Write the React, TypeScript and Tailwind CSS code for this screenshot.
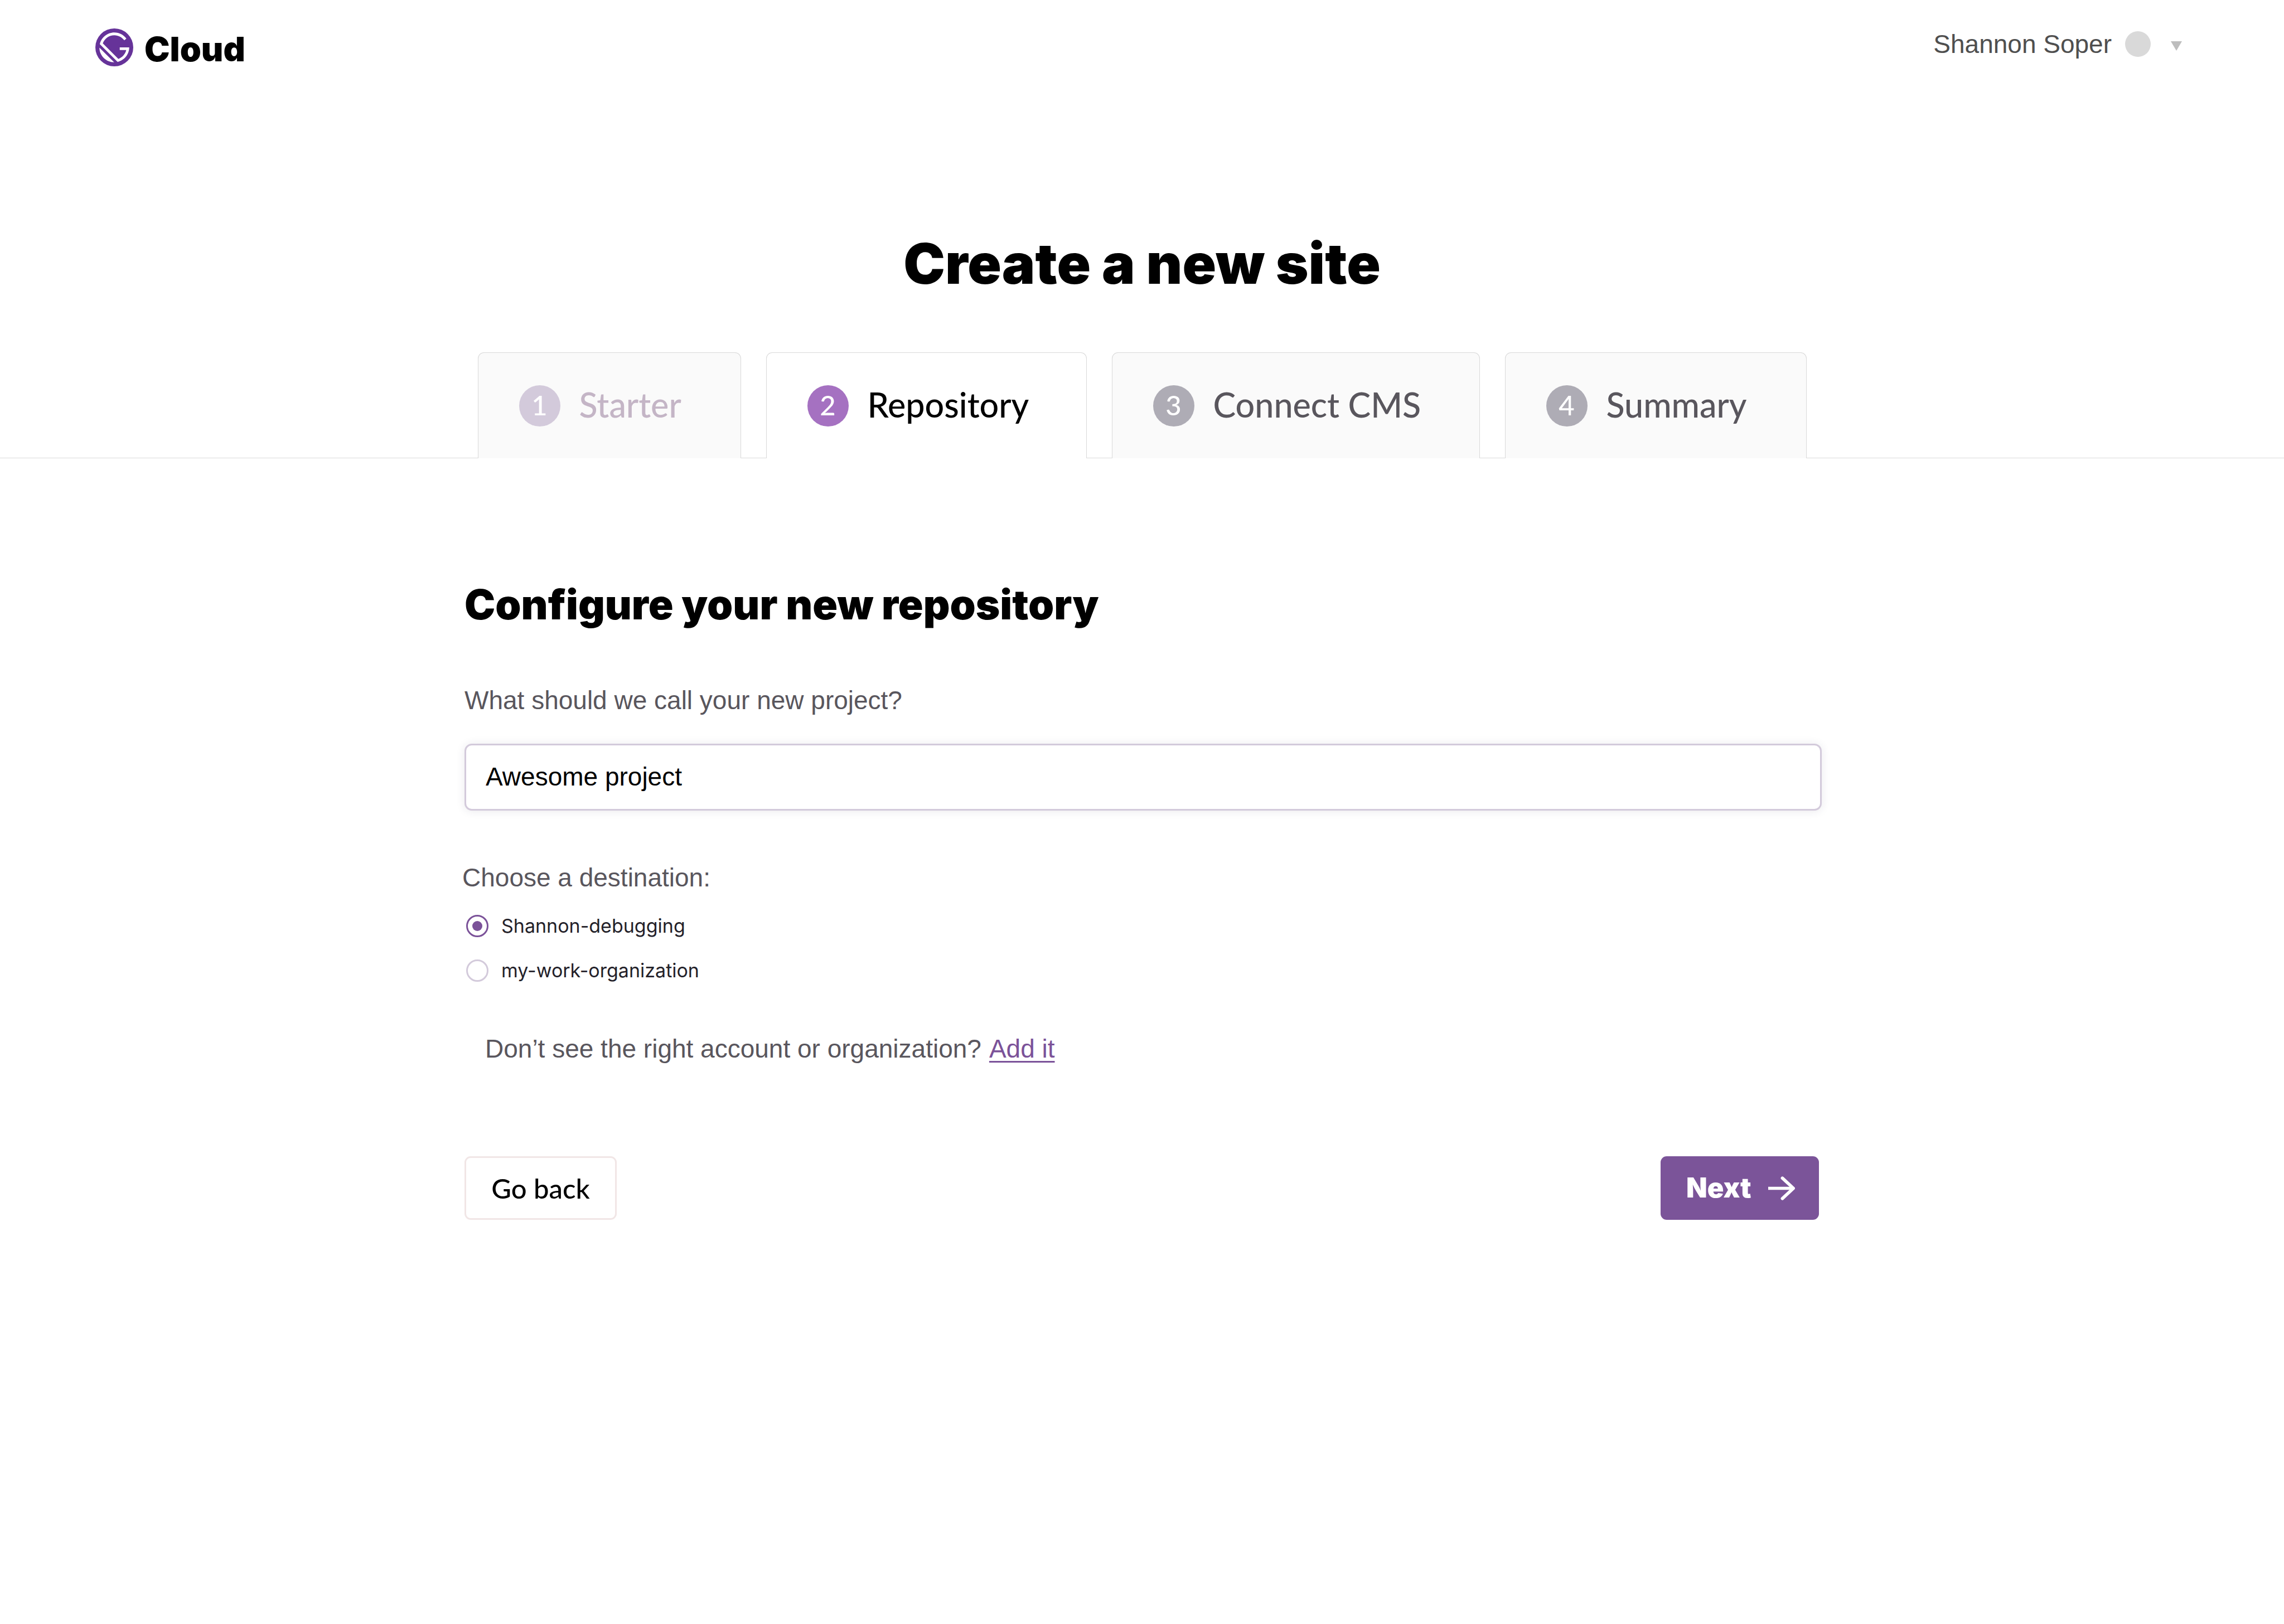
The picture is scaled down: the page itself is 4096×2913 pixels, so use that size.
import { useState } from "react";

const display = "font-['Futura_PT','Futura','Lato',sans-serif]";
const heavy = "font-['Futura_PT','Futura','Inter',sans-serif] font-black";
const body = "font-['Liberation_Sans',Arial,sans-serif]";

const steps = [
  {
    label: "Starter",
    tab: "min-w-[472px] bg-[#fafafa] text-[#c4b5c6]",
    dot: "bg-[#d3cadb]",
  },
  {
    label: "Repository",
    tab: "min-w-[575px] bg-white text-black",
    dot: "bg-[#a571c1]",
    current: true,
  },
  {
    label: "Connect CMS",
    tab: "min-w-[660px] bg-[#fafafa] text-[#59565d]",
    dot: "bg-[#aeacb5]",
  },
  {
    label: "Summary",
    tab: "min-w-[541px] bg-[#fafafa] text-[#59565d]",
    dot: "bg-[#aeacb5]",
  },
];

const destinations = ["Shannon-debugging", "my-work-organization"];

function Logo() {
  return (
    <a href="#home" className="flex items-center gap-[20px] text-black">
      <svg viewBox="0 0 28 28" className="size-[68px]" aria-hidden="true">
        <circle cx="14" cy="14" r="14" fill="#663399" />
        <path
          fill="#fff"
          d="M6.2 21.8C4.1 19.7 3 16.9 3 14.2L13.9 25c-2.8-.1-5.6-1.1-7.7-3.2zm10.2 2.9L3.3 11.6C4.4 6.7 8.8 3 14 3c3.7 0 6.9 1.8 8.9 4.5l-1.5 1.3C19.7 6.5 17 5 14 5c-3.9 0-7.2 2.5-8.5 6L17 22.5c2.9-1 5.1-3.5 5.8-6.5H18v-2h7c0 5.2-3.7 9.6-8.6 10.7z"
        />
      </svg>
      <span className={`${heavy} pt-[6px] text-[61px] leading-[62px]`}>Cloud</span>
    </a>
  );
}

function Header() {
  return (
    <header className="flex items-start justify-between pt-[51px] pr-[183px] pl-[171px]">
      <Logo />
      <button
        type="button"
        className="flex items-center text-[46px] leading-[56px] text-[#4f4f4f]"
      >
        Shannon Soper
        <span className="ml-[24px] size-[46px] rounded-full bg-[#d9d9d9]" />
        <svg viewBox="0 0 20 17" className="mt-[6px] ml-[36px] h-[17px] w-[20px]" aria-hidden="true">
          <path d="M0 0H20L10 17Z" fill="#bdbdbd" />
        </svg>
      </button>
    </header>
  );
}

function Steps() {
  return (
    <nav aria-label="Progress" className="mt-[101px] border-b border-[#d9d9d9]">
      <ol className="-mb-px flex justify-center gap-[45px]">
        {steps.map((step, i) => (
          <li
            key={step.label}
            aria-current={step.current ? "step" : undefined}
            className={`${step.tab} flex h-[190px] items-center gap-[34px] rounded-t-[11px] border border-b-0 border-[#d9d9d9] pl-[73px]`}
          >
            <span
              className={`${step.dot} ${display} flex size-[74px] items-center justify-center rounded-full pb-[4px] text-[49px] leading-[58px] font-medium text-white`}
            >
              {i + 1}
            </span>
            <span className={`${display} pb-[4px] text-[61px] leading-[74px] font-medium`}>{step.label}</span>
          </li>
        ))}
      </ol>
    </nav>
  );
}

export default function App() {
  const [name, setName] = useState("Awesome project");
  const [destination, setDestination] = useState(destinations[0]);

  return (
    <div className={`${body} min-h-screen bg-white text-[46px] leading-[56px] text-[#59565d]`}>
      <Header />
      <main>
        <h1 className={`${heavy} mt-[296px] text-center text-[100px] leading-[116px] text-black`}>
          Create a new site
        </h1>
        <Steps />
        <form
          className="mx-auto mt-[219px] max-w-[2438px]"
          onSubmit={(e) => e.preventDefault()}
        >
          <div className="flex flex-col pl-[4px]">
            <h2 className={`${heavy} text-[74px] leading-[86px] text-black`}>
              Configure your new repository
            </h2>
            <label htmlFor="project-name" className="mt-[101px]">
              What should we call your new project?
            </label>
            <input
              id="project-name"
              type="text"
              value={name}
              onChange={(e) => setName(e.target.value)}
              className="mt-[50px] h-[120px] w-full rounded-[13px] border-[3px] border-[#d3cadb] bg-white px-[35px] pb-[2px] text-black shadow-[0_1px_16px_rgba(46,41,81,0.1)] outline-none"
            />
          </div>
          <fieldset className="mt-[92px]">
            <legend>Choose a destination:</legend>
            <div className="mt-[31px] flex flex-col gap-[24px] pl-[7px]">
              {destinations.map((d) => (
                <label
                  key={d}
                  className="flex items-center gap-[23px] font-['Inter',sans-serif] text-[34px] text-[#232129]"
                >
                  <input
                    type="radio"
                    name="destination"
                    value={d}
                    checked={destination === d}
                    onChange={() => setDestination(d)}
                    className="grid size-[40px] appearance-none place-items-center rounded-full border-[3px] border-[#d3cadb] before:size-[18px] before:rounded-full checked:border-[#7b5299] checked:before:bg-[#7b5299]"
                  />
                  {d}
                </label>
              ))}
            </div>
          </fieldset>
          <p className="mt-[84px] flex gap-[14px] pl-[41px]">
            Don’t see the right account or organization?
            <a
              href="#add"
              className="text-[#7b5299] underline decoration-[3px] underline-offset-[6px]"
            >
              Add it
            </a>
          </p>
          <div className="mt-[165px] flex justify-between pr-[5px] pl-[4px] leading-[58px]">
            <button
              type="button"
              className={`${display} h-[114px] min-w-[273px] rounded-[11px] border-[3px] border-[#f1e6e6] bg-white text-[49px] font-medium text-black`}
            >
              Go back
            </button>
            <button
              type="submit"
              className={`${heavy} flex h-[114px] min-w-[284px] items-center justify-between rounded-[11px] bg-[#7b5499] pr-[43px] pl-[46px] text-[49px] text-white`}
            >
              Next
              <svg viewBox="0 0 68 60" className="h-[43px] w-[48px]" fill="none" stroke="#fff" strokeWidth="8" aria-hidden="true">
                <path d="M0 30H60" />
                <path d="M36 4L64 30L36 56" strokeLinecap="round" strokeLinejoin="round" />
              </svg>
            </button>
          </div>
        </form>
      </main>
    </div>
  );
}
